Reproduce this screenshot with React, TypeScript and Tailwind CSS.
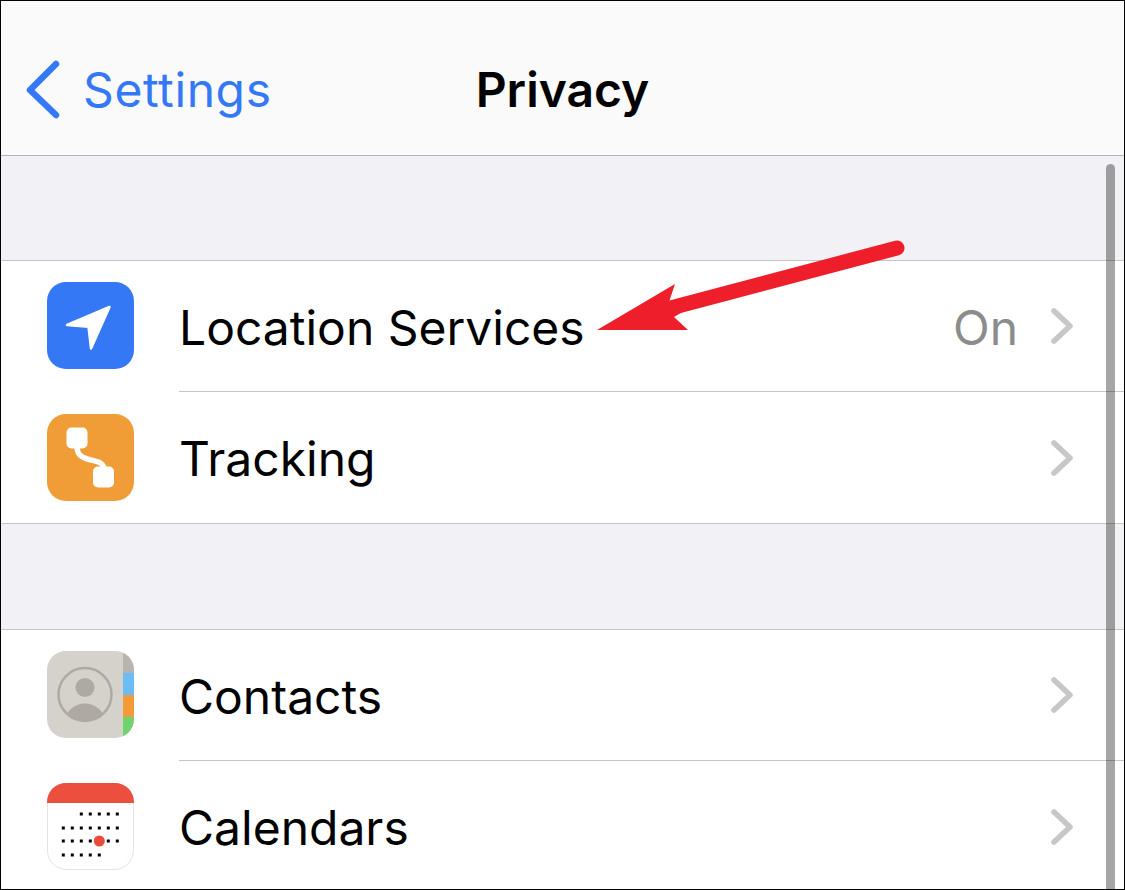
const Chevron = () => (
  <svg width="22" height="36" viewBox="0 0 22 36" fill="none" className="shrink-0">
    <path d="M3 3 L19 18 L3 33" stroke="#c7c7c7" strokeWidth="5.5" strokeLinecap="round" strokeLinejoin="round" />
  </svg>
);

const LocationIcon = () => (
  <svg width="87" height="87" viewBox="0 0 87 87" className="block">
    <rect width="87" height="87" rx="19" fill="#3478f6" />
    <path d="M62.5 25 L20 43 L41.5 44.7 L44 66.5 Z" fill="#fff" stroke="#fff" strokeWidth="2.5" strokeLinejoin="round" />
  </svg>
);

const TrackingIcon = () => (
  <svg width="87" height="87" viewBox="0 0 87 87" className="block">
    <rect width="87" height="87" rx="19" fill="#f09d38" />
    <path d="M30 32 C30 43 37 44 44 46 C52 48 57 49 57 56" fill="none" stroke="#fff" strokeWidth="5.5" />
    <rect x="19.5" y="13.5" width="21" height="21" rx="5" fill="#fff" />
    <rect x="46" y="52.5" width="21" height="21" rx="5" fill="#fff" />
  </svg>
);

const ContactsIcon = () => (
  <svg width="87" height="87" viewBox="0 0 87 87" className="block">
    <defs>
      <clipPath id="contactsClip">
        <rect width="87" height="87" rx="19" />
      </clipPath>
      <clipPath id="ringClip">
        <circle cx="38" cy="43.5" r="26" />
      </clipPath>
    </defs>
    <g clipPath="url(#contactsClip)">
      <rect width="87" height="87" fill="#d4d2ca" />
      <rect x="76" width="11" height="22" fill="#b7b5ad" />
      <rect x="76" y="22" width="11" height="22" fill="#6cbcf6" />
      <rect x="76" y="44" width="11" height="22" fill="#f29b38" />
      <rect x="76" y="66" width="11" height="21" fill="#6fd46d" />
    </g>
    <circle cx="38" cy="43.5" r="26.5" fill="none" stroke="#aeaaa3" strokeWidth="2.5" />
    <circle cx="38" cy="36.5" r="9.5" fill="#aeaaa3" />
    <ellipse cx="38" cy="71" rx="20" ry="18.5" fill="#aeaaa3" clipPath="url(#ringClip)" />
  </svg>
);

const calendarRows = [
  { y: 31, cols: [2, 3, 4, 5, 6] },
  { y: 45, cols: [0, 1, 2, 3, 4, 5, 6] },
  { y: 58, cols: [0, 1, 2, 3, 5, 6] },
  { y: 72, cols: [0, 1, 2, 3, 4] },
];

const CalendarIcon = () => (
  <svg width="87" height="87" viewBox="0 0 87 87" className="block">
    <rect x="0.5" y="0.5" width="86" height="86" rx="19" fill="#fff" stroke="#e4e4e4" />
    <path d="M0 20 V19 A19 19 0 0 1 19 0 H68 A19 19 0 0 1 87 19 V20 Z" fill="#ec4f3d" />
    {calendarRows.map((row) =>
      row.cols.map((c) => (
        <rect key={`${row.y}-${c}`} x={14.8 + c * 9} y={row.y - 1.5} width="3" height="3" fill="#000" />
      )),
    )}
    <circle cx="52.3" cy="58" r="5.5" fill="#e74c3c" />
  </svg>
);

type RowProps = {
  icon: React.ReactNode;
  label: string;
  value?: string;
  divider?: boolean;
};

const Row = ({ icon, label, value, divider }: RowProps) => (
  <div className="flex h-[131px] bg-white">
    <div className={`flex w-[178px] shrink-0 items-center pl-[46px] ${divider ? "pb-[2px]" : ""}`}>{icon}</div>
    <div className={`flex flex-1 items-center pr-[51px] ${divider ? "border-b border-[#c6c6c8]" : ""}`}>
      <span className="flex-1 pt-[3px] text-[48px] leading-none text-black">{label}</span>
      {value && <span className="mr-[33px] pt-[3px] text-[48px] leading-none text-[#8c8c8c]">{value}</span>}
      <Chevron />
    </div>
  </div>
);

export default function App() {
  return (
    <div className="relative box-border h-[890px] w-[1125px] overflow-hidden border border-black bg-[#f1f1f6] font-['Inter',sans-serif]">
      <header className="grid h-[155px] grid-cols-[1fr_auto_1fr] items-center border-b border-[#b2b2b2] bg-[#fafafa] pt-[24px]">
        <div className="flex items-center pl-[24px] text-[#3478f6]">
          <svg width="36" height="60" viewBox="0 0 36 60" fill="none">
            <path d="M31 4 L5 30 L31 55" stroke="#3478f6" strokeWidth="6.5" strokeLinecap="round" strokeLinejoin="round" />
          </svg>
          <span className="ml-[22px] text-[48px] leading-none tracking-[0.6px]">Settings</span>
        </div>
        <div className="text-[48px] font-semibold leading-none text-black">Privacy</div>
        <div />
      </header>

      <div className="h-[104px]" />

      <section className="border-y border-[#c6c6c8]">
        <Row icon={<LocationIcon />} label="Location Services" value="On" divider />
        <Row icon={<TrackingIcon />} label="Tracking" />
      </section>

      <div className="h-[105px]" />

      <section className="border-t border-[#c6c6c8]">
        <Row icon={<ContactsIcon />} label="Contacts" divider />
        <Row icon={<CalendarIcon />} label="Calendars" />
      </section>

      {/* scroll indicator */}
      <div className="absolute right-[9px] top-[163px] bottom-0 w-[9px] rounded-t-full bg-black/35" />

      {/* annotation arrow */}
      <svg className="absolute left-0 top-0" width="1125" height="890" viewBox="0 0 1125 890" fill="none">
        <path d="M660 309.5 L896 247" stroke="#ee1f2b" strokeWidth="15" strokeLinecap="round" />
        <path d="M596 329 L674 283 L668 301 L700 300 L673 316 L687 329 Z" fill="#ee1f2b" />
      </svg>
    </div>
  );
}
